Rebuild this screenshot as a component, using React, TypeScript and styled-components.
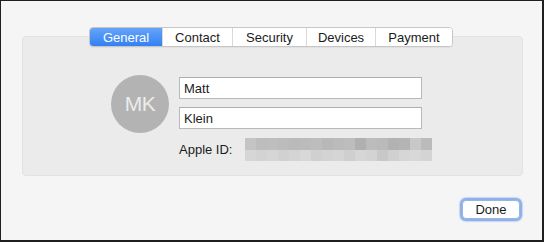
import React from "react";
import styled, { createGlobalStyle } from "styled-components";

const Global = createGlobalStyle`
  html, body { margin: 0; padding: 0; background: #f5f5f5; }
  * { box-sizing: border-box; }
`;

const Window = styled.div`
  width: 544px;
  height: 242px;
  border: 1px solid #1f1f1f;
  border-right-width: 2px;
  border-bottom-width: 2px;
  background: #f5f5f5;
  padding: 26px 20px 0 20px;
  font-family: "Liberation Sans", Arial, sans-serif;
  font-size: 13px;
  color: #1b1b1b;
  display: flex;
  flex-direction: column;
`;

const TabBar = styled.div`
  display: flex;
  justify-content: center;
  margin-bottom: -11px;
  position: relative;
  z-index: 1;
  padding-right: 1px;
`;

const Tabs = styled.div`
  display: flex;
  height: 20px;
  border: 1px solid #c6c6c6;
  border-radius: 4px;
  background: #ffffff;
  overflow: hidden;
  box-shadow: 0 1px 0 rgba(0, 0, 0, 0.04);
`;

const Tab = styled.div<{ $active?: boolean; $w: number }>`
  width: ${(p) => p.$w}px;
  display: flex;
  align-items: center;
  justify-content: center;
  font-size: 13px;
  color: ${(p) => (p.$active ? "#ffffff" : "#1b1b1b")};
  background: ${(p) =>
    p.$active ? "linear-gradient(#68a6f8, #2f7ff3)" : "#ffffff"};
  & + & {
    border-left: 1px solid #d9d9d9;
  }
  margin-top: -1px;
  margin-bottom: -1px;
`;

const Panel = styled.div`
  width: 501px;
  height: 140px;
  margin-left: 1px;
  background: #ebebeb;
  border: 1px solid #e2e2e2;
  border-radius: 4px;
  padding: 38px 0 0 88px;
  display: flex;
  align-items: flex-start;
  gap: 10px;
`;

const Avatar = styled.div`
  width: 58px;
  height: 58px;
  border-radius: 50%;
  background: #b3b3b3;
  color: #ececec;
  font-size: 21px;
  display: flex;
  align-items: center;
  justify-content: center;
  letter-spacing: -0.5px;
`;

const Form = styled.div`
  display: flex;
  flex-direction: column;
  gap: 8px;
  padding-top: 2px;
`;

const Field = styled.div`
  width: 243px;
  height: 22px;
  background: #ffffff;
  border: 1px solid #b9b9b9;
  border-top-color: #aeaeae;
  padding: 0 4px;
  display: flex;
  align-items: center;
  font-size: 13px;
  color: #1b1b1b;
`;

const IdRow = styled.div`
  display: flex;
  align-items: center;
  margin-top: 1px;
  height: 23px;
`;

const Label = styled.span`
  width: 66px;
  font-size: 13px;
  color: #1b1b1b;
`;

const Blur = styled.div`
  display: grid;
  grid-template-columns: repeat(17, 11px);
  grid-template-rows: 12px 11px;
`;

const Cell = styled.div<{ $c: string }>`
  background: ${(p) => p.$c};
`;

const ButtonRow = styled.div`
  display: flex;
  justify-content: flex-end;
  padding-top: 24px;
  padding-right: 2px;
`;

const Button = styled.div`
  width: 58px;
  height: 19px;
  border-radius: 4px;
  background: #ffffff;
  border: 1px solid #9bb5e0;
  box-shadow: 0 0 0 2px #8fb0ea, 0 0 1px 3px rgba(120, 160, 230, 0.35);
  display: flex;
  align-items: center;
  justify-content: center;
  font-size: 13px;
  color: #1b1b1b;
`;

const top = [
  "#c4c4c4", "#bdbdbd", "#bebebe", "#bcbcbc", "#bababa", "#bbbbbb", "#bdbdbd", "#b8b8b8",
  "#bbbbbb", "#bdbdbd", "#b0b0b0", "#bcbcbc", "#bababa", "#b2b2b2", "#b4b4b4", "#c8c8c8", "#bbbbbb",
];
const bottom = [
  "#d6d6d6", "#d3d3d3", "#d6d6d6", "#d1d1d1", "#d4d4d4", "#d8d8d8", "#d0d0d0", "#d3d3d3",
  "#d5d5d5", "#cfcfcf", "#d6d6d6", "#d3d3d3", "#c8c8c8", "#d0d0d0", "#d6d6d6", "#d8d8d8", "#d4d4d4",
];

const tabs: [string, number][] = [
  ["General", 72],
  ["Contact", 70],
  ["Security", 74],
  ["Devices", 69],
  ["Payment", 77],
];

export default function App() {
  return (
    <>
      <Global />
      <Window>
        <TabBar>
          <Tabs>
            {tabs.map(([t, w], i) => (
              <Tab key={t} $w={w} $active={i === 0}>
                {t}
              </Tab>
            ))}
          </Tabs>
        </TabBar>
        <Panel>
          <Avatar>MK</Avatar>
          <Form>
            <Field>Matt</Field>
            <Field>Klein</Field>
            <IdRow>
              <Label>Apple ID:</Label>
              <Blur>
                {top.map((c, i) => (
                  <Cell key={"t" + i} $c={c} />
                ))}
                {bottom.map((c, i) => (
                  <Cell key={"b" + i} $c={c} />
                ))}
              </Blur>
            </IdRow>
          </Form>
        </Panel>
        <ButtonRow>
          <Button>Done</Button>
        </ButtonRow>
      </Window>
    </>
  );
}
